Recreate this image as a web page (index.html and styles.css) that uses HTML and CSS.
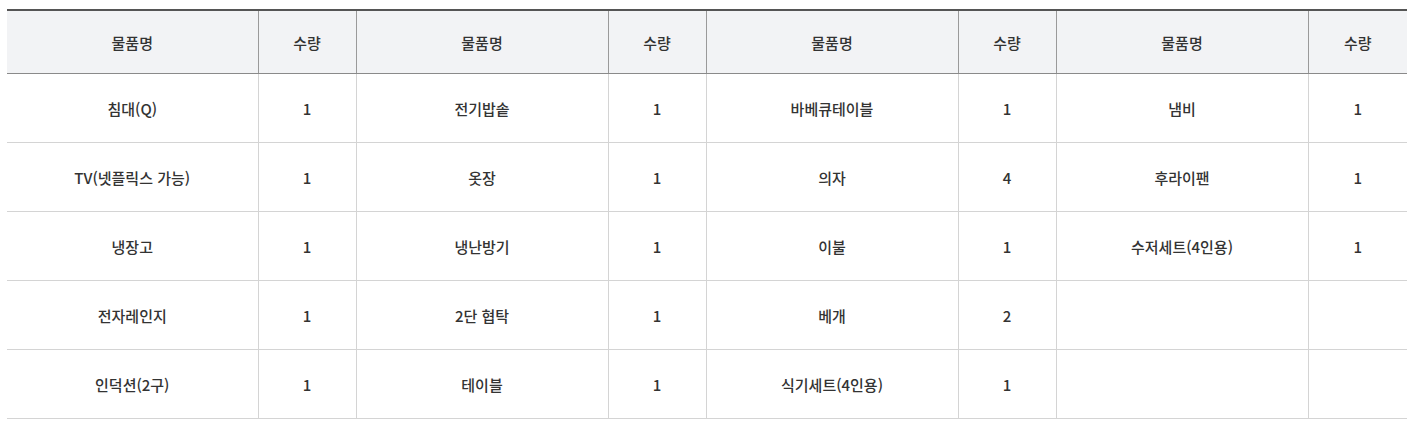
FILE: index.html
```html
<!DOCTYPE html>
<html lang="ko">
<head>
<meta charset="utf-8">
<link rel="stylesheet" href="styles.css">
</head>
<body>
<div class="wrap">
<table class="items">
<colgroup>
<col class="c-name"><col class="c-qty"><col class="c-name2"><col class="c-qty"><col class="c-name2"><col class="c-qty"><col class="c-name2"><col class="c-qty2">
</colgroup>
<thead>
<tr><th>물품명</th><th>수량</th><th>물품명</th><th>수량</th><th>물품명</th><th>수량</th><th>물품명</th><th>수량</th></tr>
</thead>
<tbody>
<tr><td>침대(Q)</td><td>1</td><td>전기밥솥</td><td>1</td><td>바베큐테이블</td><td>1</td><td>냄비</td><td>1</td></tr>
<tr><td>TV(넷플릭스 가능)</td><td>1</td><td>옷장</td><td>1</td><td>의자</td><td>4</td><td>후라이팬</td><td>1</td></tr>
<tr><td>냉장고</td><td>1</td><td>냉난방기</td><td>1</td><td>이불</td><td>1</td><td>수저세트(4인용)</td><td>1</td></tr>
<tr><td>전자레인지</td><td>1</td><td>2단 협탁</td><td>1</td><td>베개</td><td>2</td><td></td><td></td></tr>
<tr><td>인덕션(2구)</td><td>1</td><td>테이블</td><td>1</td><td>식기세트(4인용)</td><td>1</td><td></td><td></td></tr>
</tbody>
</table>
</div>
</body>
</html>
```
FILE: styles.css
```css
html, body {
  margin: 0;
  padding: 0;
  background: #fff;
}
.wrap {
  padding: 9px 9px 0 7px;
}
.items {
  width: 1400px;
  border-collapse: collapse;
  table-layout: fixed;
  font-family: "Noto Sans CJK KR", "Noto Sans", sans-serif;
  font-size: 15px;
  font-weight: 500;
  color: #333;
  border-top: 2px solid #555;
}
.c-name { width: 251px; }
.c-name2 { width: 252px; }
.c-qty { width: 98px; }
.c-qty2 { width: 99px; }
.items th {
  height: 62px;
  padding: 0;
  font-weight: 500;
  background: #f2f3f5;
  border-bottom: 1px solid #8a8a8a;
  border-left: 1px solid #9a9a9a;
  text-align: center;
  vertical-align: middle;
}
.items td {
  height: 68px;
  padding: 0;
  text-align: center;
  vertical-align: middle;
  border-bottom: 1px solid #d4d4d4;
  border-left: 1px solid #d4d4d4;
}
.items th:first-child,
.items td:first-child {
  border-left: none;
}
```
